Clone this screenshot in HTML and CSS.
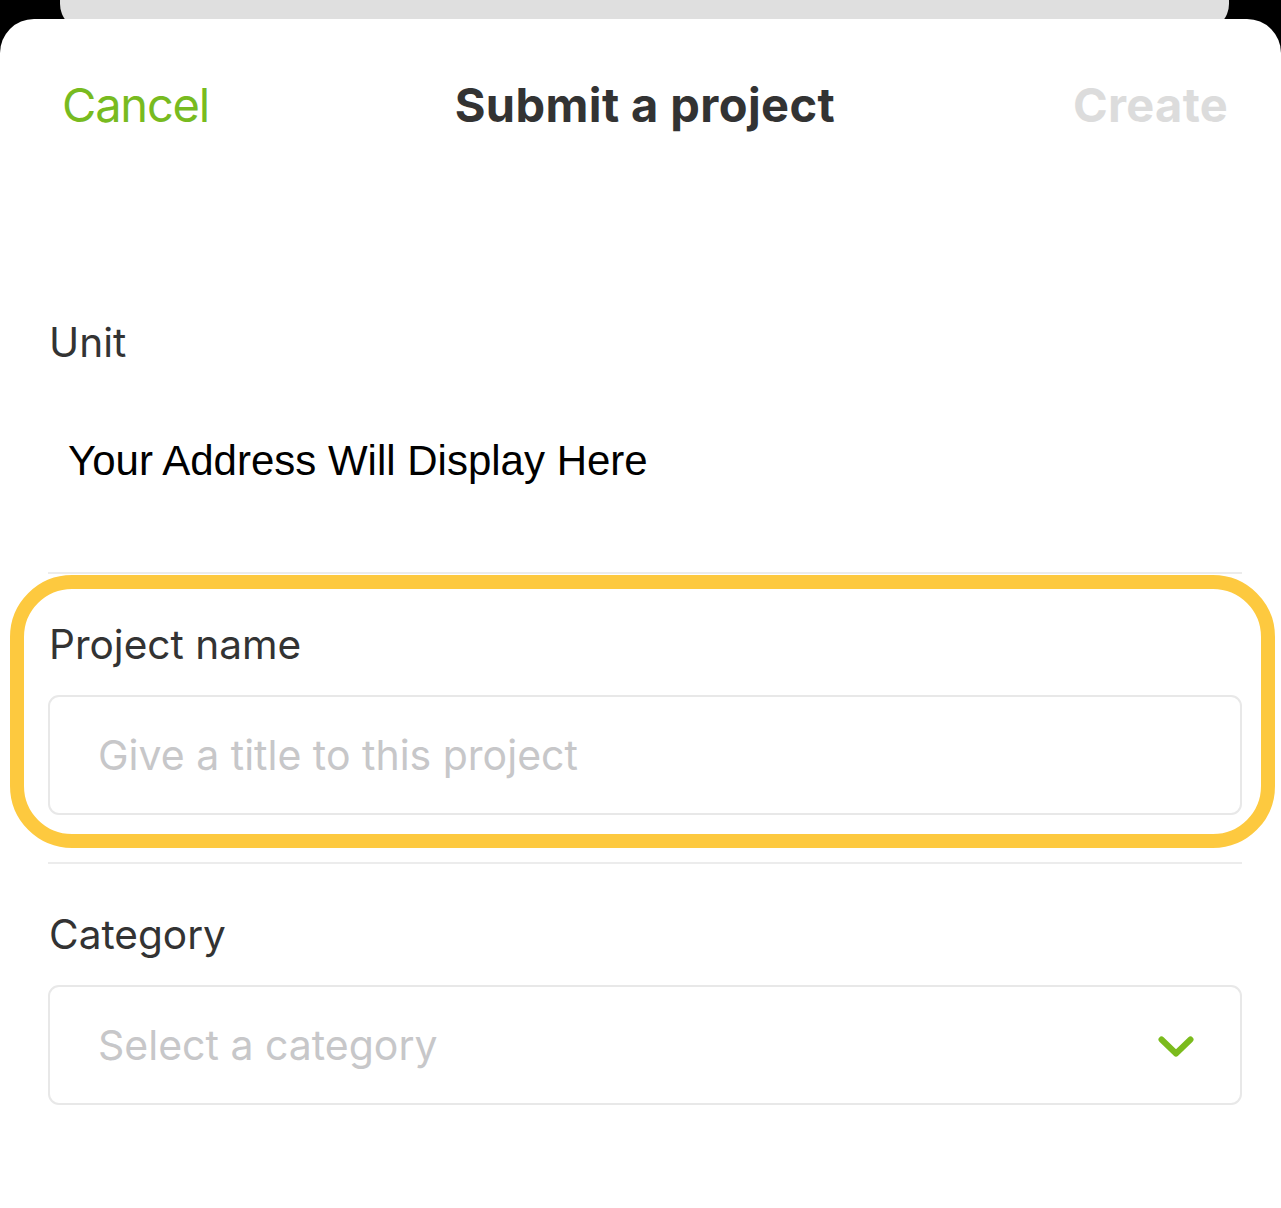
FILE: index.html
```html
<!DOCTYPE html>
<html lang="en">
<head>
<meta charset="utf-8">
<title>Submit a project</title>
<link rel="stylesheet" href="styles.css">
</head>
<body>
<div class="backdrop">
  <div class="card-behind"></div>
</div>
<main class="sheet">
  <header class="sheet-header">
    <span class="btn-cancel">Cancel</span>
    <h1 class="sheet-title">Submit a project</h1>
    <span class="btn-create">Create</span>
  </header>
  <section class="form">
    <div class="field field-unit">
      <div class="label">Unit</div>
      <div class="address">Your Address Will Display Here</div>
    </div>
    <div class="field field-project">
      <div class="highlight"></div>
      <div class="label">Project name</div>
      <div class="box"><span class="placeholder">Give a title to this project</span></div>
    </div>
    <div class="field field-category">
      <div class="label">Category</div>
      <div class="box box-select">
        <span class="placeholder">Select a category</span>
        <svg class="chevron" width="36" height="22" viewBox="0 0 36 22" aria-hidden="true">
          <path d="M3.5 3.5 L18 17.5 L32.5 3.5" fill="none" stroke="#7bbb1d" stroke-width="6" stroke-linecap="round" stroke-linejoin="round"/>
        </svg>
      </div>
    </div>
  </section>
</main>
</body>
</html>
```

FILE: styles.css
```css
html, body {
  margin: 0;
  padding: 0;
}
body {
  background: #000;
  font-family: Inter, "Noto Sans", sans-serif;
  width: 1281px;
  height: 1208px;
  overflow: hidden;
}
.backdrop {
  height: 19px;
  overflow: hidden;
}
.card-behind {
  height: 60px;
  margin: -30px 52px 0 60px;
  background: #dfdfdf;
  border-radius: 26px;
}
.sheet {
  background: #fff;
  border-radius: 34px 34px 0 0;
  height: 1189px;
}
.sheet-header {
  display: flex;
  justify-content: space-between;
  align-items: baseline;
  padding: 58px 53px 0 62px;
  line-height: 56px;
  font-size: 47px;
}
.btn-cancel {
  color: #78bb1f;
  font-weight: 400;
  letter-spacing: -1.2px;
}
.sheet-title {
  margin: 0 0 0 8px;
  font-size: 47px;
  font-weight: 700;
  color: #333;
  line-height: 56px;
  letter-spacing: 0.4px;
}
.btn-create {
  color: #dcdcdc;
  font-weight: 700;
  letter-spacing: 0.3px;
}
.form {
  padding: 0 39px 0 48px;
}
.field {
  position: relative;
}
.field + .field {
  border-top: 2px solid #ececec;
}
.label {
  font-size: 40.6px;
  line-height: 48px;
  color: #333;
  padding-left: 1px;
}
.field-unit {
  padding: 186px 0 87px;
}
.address {
  margin-top: 70px;
  padding-left: 20px;
  font-family: "Liberation Sans", Arial, sans-serif;
  font-size: 42px;
  line-height: 48px;
  color: #000;
}
.field-project,
.field-category {
  padding-top: 47px;
}
.field-project {
  padding-bottom: 47px;
}
.box {
  margin-top: 26px;
  height: 116px;
  border: 2px solid #e8e8e8;
  border-radius: 11px;
  display: flex;
  align-items: center;
  padding: 0 48px;
  box-sizing: content-box;
}
.box-select {
  justify-content: space-between;
  padding-right: 46px;
}
.placeholder {
  font-size: 41px;
  color: #c7c7c9;
}
.chevron {
  display: block;
  margin-top: 4px;
}
.highlight {
  position: absolute;
  left: -38px;
  top: 1px;
  width: 1265px;
  height: 273px;
  box-sizing: border-box;
  border: 14px solid #fdc93f;
  border-radius: 62px;
  pointer-events: none;
}
```
